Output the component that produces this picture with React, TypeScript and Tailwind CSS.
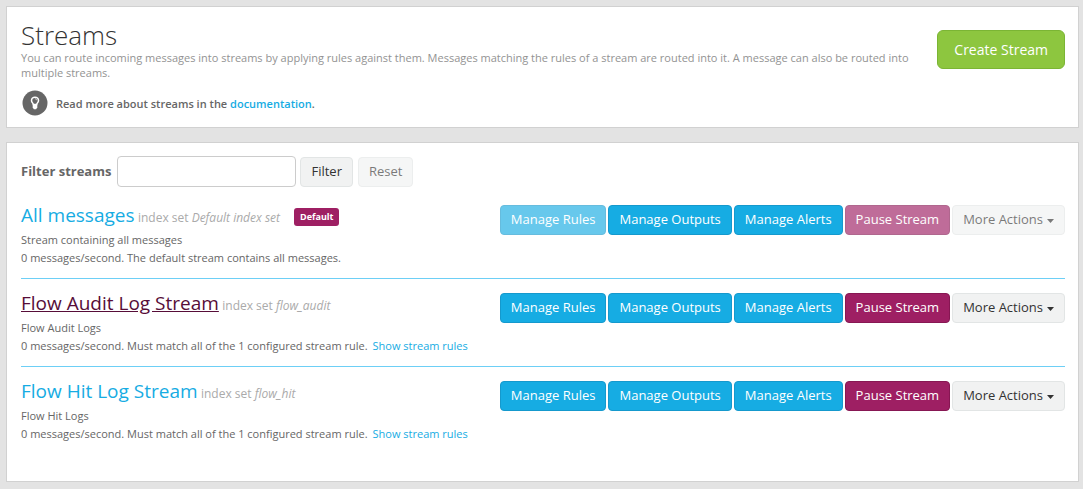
import type { ButtonHTMLAttributes } from "react";

type Variant = "info" | "primary" | "plain";

const variants: Record<Variant, string> = {
  info: "border-[#1599cd] bg-[#16ace3] text-white",
  primary: "border-[#871753] bg-[#9e1f63] text-white",
  plain: "border-[#e2e5e5] bg-[#f1f2f2] text-[#333333]",
};

type ButtonProps = ButtonHTMLAttributes<HTMLButtonElement> & { variant: Variant };

function Button({ variant, className = "", ...props }: ButtonProps) {
  return (
    <button
      type="button"
      className={`rounded border px-[10px] pt-1 pb-[6px] text-[13px] leading-[18px] whitespace-nowrap disabled:opacity-65 ${variants[variant]} ${className}`}
      {...props}
    />
  );
}

interface Stream {
  title: string;
  indexSet: string;
  description: string;
  status: string;
  isDefault?: boolean;
  active?: boolean;
}

const streams: Stream[] = [
  {
    title: "All messages",
    indexSet: "Default index set",
    description: "Stream containing all messages",
    status: "0 messages/second. The default stream contains all messages.",
    isDefault: true,
  },
  {
    title: "Flow Audit Log Stream",
    indexSet: "flow_audit",
    description: "Flow Audit Logs",
    status: "0 messages/second. Must match all of the 1 configured stream rule.",
    active: true,
  },
  {
    title: "Flow Hit Log Stream",
    indexSet: "flow_hit",
    description: "Flow Hit Logs",
    status: "0 messages/second. Must match all of the 1 configured stream rule.",
  },
];

function StreamRow({ stream }: { stream: Stream }) {
  const locked = stream.isDefault;
  return (
    <li className="flex items-start justify-between gap-4 border-b border-b-[#6dcff6] pt-[14px] pb-[11px] first:pt-0 last:border-b-0">
      <div>
        <div className="flex items-center">
          <h2 className="text-[13px] leading-5 text-[#aaaaaa]">
            <a
              href="#stream"
              className={`text-[19px] ${stream.active ? "text-[#570d38] underline" : "text-[#16ace3]"}`}
            >
              {stream.title}
            </a>{" "}
            <span className="text-[12px]">
              index set <em>{stream.indexSet}</em>
            </span>
          </h2>
          {stream.isDefault && (
            <span className="ml-[14px] rounded-[3px] bg-[#9e1f63] px-[6px] text-[9px] leading-[18px] font-bold text-white">
              Default
            </span>
          )}
        </div>
        <p className="mt-[3px] text-[11px] leading-[18px]">{stream.description}</p>
        <p className="text-[11px] leading-[18px]">
          {stream.status}
          {!locked && (
            <a href="#rules" className="ml-[5px] text-[#16ace3]">
              Show stream rules
            </a>
          )}
        </p>
      </div>
      <div className="flex shrink-0 gap-[2px]">
        <Button variant="info" disabled={locked}>Manage Rules</Button>
        <Button variant="info">Manage Outputs</Button>
        <Button variant="info">Manage Alerts</Button>
        <Button variant="primary" disabled={locked}>Pause Stream</Button>
        <Button variant="plain" className="flex items-center gap-1" disabled={locked} aria-haspopup="menu">
          More Actions
          <svg className="mt-1" width="7" height="4" viewBox="0 0 7 4" aria-hidden="true">
            <path d="M0 0h7L3.500 4z" fill="currentColor" />
          </svg>
        </Button>
      </div>
    </li>
  );
}

export default function App() {
  return (
    <div className="flex min-h-screen flex-col gap-[14px] bg-[#e3e3e3] pt-[6px] pr-1 pb-[7px] pl-[6px] font-['Open_Sans',sans-serif] text-[#666666]">
      <header className="flex items-start justify-between border border-[#d1d1d1] bg-white pt-[13px] pr-[13px] pb-[11px] pl-[14px]">
        <div className="max-w-[900px] flex-1">
          <h1 className="text-[26px] leading-[30px] font-light text-[#333333]">Streams</h1>
          <p className="text-[11px] leading-[15px] text-[#939393]">
            You can route incoming messages into streams by applying rules against them. Messages matching the rules of
            a stream are routed into it. A message can also be routed into multiple streams.
          </p>
          <p className="mt-[10px] flex items-center gap-2 pl-[1px] text-[11px] leading-[25px] font-semibold">
            <svg width="26" height="26" viewBox="0 0 26 26" aria-hidden="true">
              <circle cx="13" cy="13" r="12.500" fill="#666666" />
              <path
                d="M11.400 14.500c-.3-1.500-1.900-2.200-1.900-4.100a3.500 3.200 0 0 1 7 0c0 1.900-1.600 2.600-1.900 4.100z"
                fill="none"
                stroke="#ffffff"
                strokeWidth="1.500"
              />
              <path d="M13 8.800c1 0 1.600.5 1.600 1.400" fill="none" stroke="#ffffff" strokeWidth=".7" />
              <path d="M10.700 14h4.600v3.500l-1.200 1.700h-2.200l-1.200-1.700z" fill="#ffffff" />
            </svg>
            <span>
              Read more about streams in the{" "}
              <a href="#documentation" className="text-[#16ace3]">documentation</a>.
            </span>
          </p>
        </div>
        <button
          type="button"
          className="mt-[10px] rounded-md border border-[#7bb534] bg-[#8dc63f] px-4 py-[9px] text-[14px] leading-[19px] whitespace-nowrap text-white"
        >
          Create Stream
        </button>
      </header>

      <main className="flex-1 border border-[#d1d1d1] bg-white pt-[13px] pr-[13px] pl-[14px]">
        <form className="flex items-center" onSubmit={(event) => event.preventDefault()}>
          <label htmlFor="filter" className="mr-[6px] text-[13px] font-bold">Filter streams</label>
          <input
            id="filter"
            type="text"
            className="mr-1 h-[31px] w-[179px] rounded border border-[#cccccc] bg-white px-3 text-[13px]"
          />
          <Button variant="plain" className="mr-[5px]">Filter</Button>
          <Button variant="plain" disabled>Reset</Button>
        </form>
        <ul className="mt-[18px]">
          {streams.map((stream) => (
            <StreamRow key={stream.title} stream={stream} />
          ))}
        </ul>
      </main>
    </div>
  );
}
